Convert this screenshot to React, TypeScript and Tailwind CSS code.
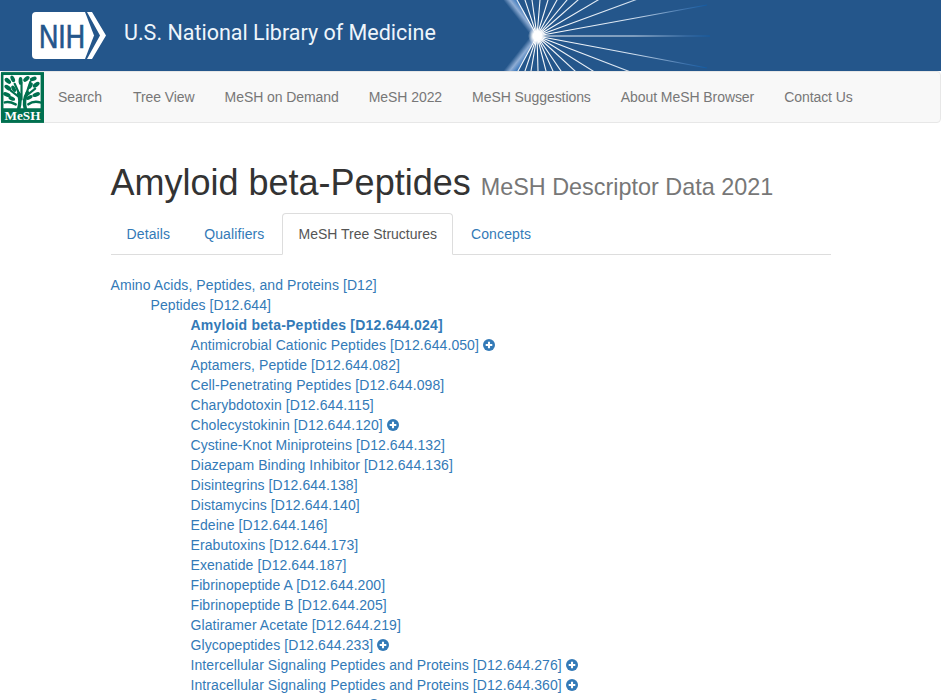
import React from 'react';

const navLinks = ['Search', 'Tree View', 'MeSH on Demand', 'MeSH 2022', 'MeSH Suggestions', 'About MeSH Browser', 'Contact Us'];

const tabs = ['Details', 'Qualifiers', 'MeSH Tree Structures', 'Concepts'];

const children: { name: string; code: string; plus?: boolean }[] = [
    { name: 'Antimicrobial Cationic Peptides', code: 'D12.644.050', plus: true },
    { name: 'Aptamers, Peptide', code: 'D12.644.082' },
    { name: 'Cell-Penetrating Peptides', code: 'D12.644.098' },
    { name: 'Charybdotoxin', code: 'D12.644.115' },
    { name: 'Cholecystokinin', code: 'D12.644.120', plus: true },
    { name: 'Cystine-Knot Miniproteins', code: 'D12.644.132' },
    { name: 'Diazepam Binding Inhibitor', code: 'D12.644.136' },
    { name: 'Disintegrins', code: 'D12.644.138' },
    { name: 'Distamycins', code: 'D12.644.140' },
    { name: 'Edeine', code: 'D12.644.146' },
    { name: 'Erabutoxins', code: 'D12.644.173' },
    { name: 'Exenatide', code: 'D12.644.187' },
    { name: 'Fibrinopeptide A', code: 'D12.644.200' },
    { name: 'Fibrinopeptide B', code: 'D12.644.205' },
    { name: 'Glatiramer Acetate', code: 'D12.644.219' },
    { name: 'Glycopeptides', code: 'D12.644.233', plus: true },
    { name: 'Intercellular Signaling Peptides and Proteins', code: 'D12.644.276', plus: true },
    { name: 'Intracellular Signaling Peptides and Proteins', code: 'D12.644.360', plus: true },
    { name: 'Lipopeptides', code: 'D12.644.456', plus: true },
];

// where the rays of the burst cross the top and bottom edge, measured from its centre
const topRays = [98, 61, 41, 30, 20, 11, 3, -5, -12, -20];
const bottomRays = [91, 56, 38, 24, 16, 9, 1, -6, -12, -19];

const PlusSign = ({ raised }: { raised?: boolean }) => (
    <svg
        width="12"
        height="12"
        viewBox="0 0 12 12"
        className={raised ? 'inline-block ml-[4px] align-[0px]' : 'inline-block ml-[4px] align-[-1px]'}
    >
        <circle cx="6" cy="6" r="6" fill="#337ab7" />
        <path d="M6 2.7v6.6M2.7 6h6.6" stroke="#fff" strokeWidth="2.1" />
    </svg>
);

const Starburst = () => {
    const cx = 120;
    const cy = 36;
    const far = (dx: number, dy: number) => ({ x2: cx + dx * 5, y2: cy + dy * 5 });
    return (
        <svg width="300" height="71" viewBox="0 0 300 71" className="absolute left-[417px] top-0">
            <defs>
                <radialGradient id="ray" gradientUnits="userSpaceOnUse" cx={cx} cy={cy} r="176">
                    <stop offset="0" stopColor="#ffffff" />
                    <stop offset="0.55" stopColor="#d5e2f0" />
                    <stop offset="0.85" stopColor="#3f74ae" />
                    <stop offset="1" stopColor="#0d57a0" />
                </radialGradient>
                <linearGradient id="bandTop" gradientUnits="userSpaceOnUse" x1="86" y1="0" x2="100" y2="-11">
                    <stop offset="0" stopColor="#24568b" />
                    <stop offset="0.3" stopColor="#8fadd4" />
                    <stop offset="0.65" stopColor="#2f70b8" />
                    <stop offset="1" stopColor="#145aa0" />
                </linearGradient>
                <linearGradient id="bandBottom" gradientUnits="userSpaceOnUse" x1="86" y1="71" x2="100" y2="82">
                    <stop offset="0" stopColor="#24568b" />
                    <stop offset="0.3" stopColor="#8fadd4" />
                    <stop offset="0.65" stopColor="#2f70b8" />
                    <stop offset="1" stopColor="#145aa0" />
                </linearGradient>
                <radialGradient id="glow">
                    <stop offset="0.45" stopColor="#ffffff" />
                    <stop offset="1" stopColor="#ffffff" stopOpacity="0" />
                </radialGradient>
            </defs>
            <polygon points="86,0 101,0 120,36 111,36" fill="url(#bandTop)" />
            <polygon points="86,71 101,71 120,36 111,36" fill="url(#bandBottom)" />
            <g stroke="url(#ray)" strokeWidth="1.1">
                {topRays.map((dx) => (
                    <line key={`t${dx}`} x1={cx} y1={cy} {...far(dx, -36)} />
                ))}
                {bottomRays.map((dx) => (
                    <line key={`b${dx}`} x1={cx} y1={cy} {...far(dx, 35)} />
                ))}
                <line x1={cx} y1={cy} x2={293} y2={36} />
                <line x1={cx} y1={cy} x2={290} y2={5} />
                <line x1={cx} y1={cy} x2={290} y2={68} />
            </g>
            <circle cx={cx} cy={cy} r="9" fill="url(#glow)" />
        </svg>
    );
};

const NihLogo = () => (
    <svg width="76" height="50" viewBox="0 0 76 50" className="shrink-0">
        <path d="M4 1H53L62 24.500L53 48H4Q0 48 0 44V5Q0 1 4 1Z" fill="#fff" />
        <polygon points="55,1 60,1 74,24.500 60,48 55,48 68,24.500" fill="#fff" />
        <text
            x="7"
            y="37"
            fontSize="33"
            fill="#24568b"
            stroke="#24568b"
            strokeWidth="0.7"
            textLength="46"
            lengthAdjust="spacingAndGlyphs"
            fontFamily="'Liberation Sans', sans-serif"
        >
            NIH
        </text>
    </svg>
);

const MeshLogo = () => (
    <svg width="43" height="51" viewBox="0 0 44 52" className="shrink-0 mt-[1px] ml-[1px]">
        <rect width="44" height="52" fill="#00704f" />
        <rect x="2.500" y="3" width="38" height="34" fill="#fff" />
        <g stroke="#00704f" fill="none" strokeLinecap="round">
            <path d="M18 38C20 31 20 27 18 22M25 38C23 31 24 26 27 21" strokeWidth="3.600" />
            <path d="M19 26L10 19M19 23L14 12M25 25L35 17M26 22L30 10M21 28L21 11" strokeWidth="2.200" />
            <path d="M15 33C11 31 7 30 4 31M28 33C32 30 36 30 40 31" strokeWidth="2.600" />
        </g>
        <g fill="#00704f">
            <ellipse cx="7" cy="9" rx="3.800" ry="2.200" transform="rotate(40 7 9)" />
            <ellipse cx="12" cy="7" rx="3.600" ry="2" transform="rotate(65 12 7)" />
            <ellipse cx="7" cy="16" rx="4" ry="2.100" transform="rotate(35 7 16)" />
            <ellipse cx="6" cy="23" rx="4" ry="2.100" transform="rotate(20 6 23)" />
            <ellipse cx="13" cy="17" rx="3.600" ry="1.900" transform="rotate(60 13 17)" />
            <ellipse cx="20" cy="9" rx="4" ry="2" transform="rotate(90 20 9)" />
            <ellipse cx="26" cy="7" rx="3.800" ry="2.100" transform="rotate(-40 26 7)" />
            <ellipse cx="33" cy="7" rx="3.600" ry="2" transform="rotate(-20 33 7)" />
            <ellipse cx="36" cy="13" rx="4" ry="2.100" transform="rotate(-35 36 13)" />
            <ellipse cx="30" cy="14" rx="3.600" ry="1.900" transform="rotate(-60 30 14)" />
            <ellipse cx="36" cy="23" rx="4" ry="2.100" transform="rotate(-20 36 23)" />
            <ellipse cx="29" cy="26" rx="3.600" ry="1.900" transform="rotate(-30 29 26)" />
            <ellipse cx="11" cy="27" rx="3.600" ry="1.900" transform="rotate(25 11 27)" />
        </g>
        <text x="22" y="49" textAnchor="middle" fontSize="13.500" fontWeight="700" fill="#fff" fontFamily="'Liberation Serif', serif">
            MeSH
        </text>
    </svg>
);

export default function App() {
    return (
        <div className="h-[700px] overflow-hidden bg-white font-['Liberation_Sans',sans-serif] text-[14px] leading-[20px] text-[#333]">
            <header className="relative h-[71px] overflow-hidden bg-[#24568b] pl-[32px] flex items-center">
                <Starburst />
                <NihLogo />
                <span className="ml-[16px] mb-[5px] font-['Roboto',sans-serif] text-[21.5px] leading-[30px] text-[#eef5fb]">
                    U.S. National Library of Medicine
                </span>
            </header>

            <nav className="flex h-[52px] rounded-[4px] border border-[#e7e7e7] bg-[#f8f8f8]">
                <div className="-ml-[1px] -mt-[1px]">
                    <MeshLogo />
                </div>
                <ul className="flex -ml-[1px] tracking-[-0.07px]">
                    {navLinks.map((link) => (
                        <li
                            key={link}
                            className={
                                link === 'Search'
                                    ? 'pl-[15px] pr-[16px] py-[15px] text-[#777]'
                                    : 'px-[15px] py-[15px] text-[#777]'
                            }
                        >
                            {link}
                        </li>
                    ))}
                </ul>
            </nav>

            <main className="mx-auto w-[750px] px-[15px]">
                <h1 className="mt-[40px] mb-[10px] text-[36px] leading-[40px]">
                    Amyloid beta-Peptides{' '}
                    <small className="text-[23.4px] leading-none text-[#777]">MeSH Descriptor Data 2021</small>
                </h1>

                <ul className="flex border-b border-[#ddd]">
                    {tabs.map((tab) => (
                        <li
                            key={tab}
                            className={
                                tab === 'MeSH Tree Structures'
                                    ? 'mr-[2px] -mb-px rounded-t-[4px] border border-[#ddd] border-b-white bg-white px-[15px] pt-[10px] pb-[9px] text-[#555]'
                                    : 'mr-[2px] border border-transparent px-[15px] pt-[10px] pb-[9px] tracking-[0.12px] text-[#337ab7]'
                            }
                        >
                            {tab}
                        </li>
                    ))}
                </ul>

                <div className="pt-[20px] tracking-[0.08px] text-[#337ab7]">
                    <div>Amino Acids, Peptides, and Proteins [D12]</div>
                    <div className="pl-[40px]">Peptides [D12.644]</div>
                    <div className="pl-[80px] font-bold tracking-[0.23px]">Amyloid beta-Peptides [D12.644.024]</div>
                    {children.map((row) => (
                        <div key={row.code} className={row.code === 'D12.644.456' ? 'pl-[80px] mt-[1px]' : 'pl-[80px]'}>
                            {row.name} [{row.code}]
                            {row.plus && <PlusSign raised={row.code === 'D12.644.456'} />}
                        </div>
                    ))}
                </div>
            </main>
        </div>
    );
}
